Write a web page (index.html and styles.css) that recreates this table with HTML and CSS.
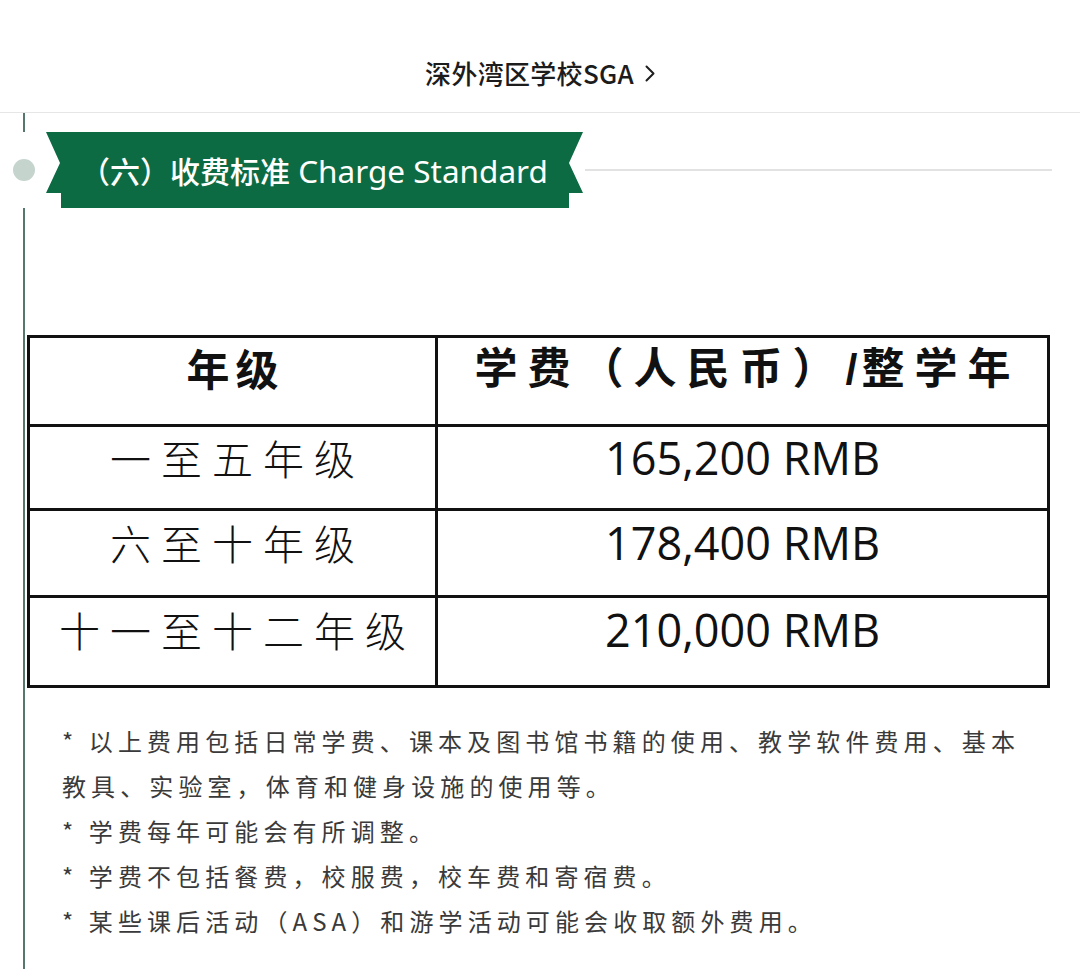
FILE: index.html
```html
<!DOCTYPE html>
<html lang="zh-CN">
<head>
<meta charset="utf-8">
<title>深外湾区学校SGA</title>
<link rel="stylesheet" href="styles.css">
</head>
<body>
<header class="topbar">
  <span class="topbar-title">深外湾区学校SGA</span>
  <svg class="topbar-chevron" width="10" height="17" viewBox="0 0 10 17" aria-hidden="true"><polyline points="1.5,1.5 8.5,8.5 1.5,15.5" fill="none" stroke="#1f1f1f" stroke-width="2" stroke-linecap="round" stroke-linejoin="round"/></svg>
</header>
<main class="article">
  <aside class="rail" aria-hidden="true">
    <span class="rail-line rail-line-short"></span>
    <span class="rail-node"><span class="rail-dot"></span></span>
    <span class="rail-line rail-line-long"></span>
  </aside>
  <section class="content">
    <div class="section-head">
      <div class="ribbon"><h2 class="ribbon-text"><span class="ribbon-cn">（六）收费标准</span> Charge Standard</h2></div>
      <span class="head-rule"></span>
    </div>
    <table class="fees">
      <tr class="row-head">
        <th class="grade grade-head">年级</th>
        <th class="fee fee-head">学费（人民币）<span class="slash">/</span>整学年</th>
      </tr>
      <tr class="row-1">
        <td class="grade">一至五年级</td>
        <td class="fee">165,200 RMB</td>
      </tr>
      <tr class="row-2">
        <td class="grade">六至十年级</td>
        <td class="fee">178,400 RMB</td>
      </tr>
      <tr class="row-3">
        <td class="grade">十一至十二年级</td>
        <td class="fee">210,000 RMB</td>
      </tr>
    </table>
    <div class="notes">
      <p>* 以上费用包括日常学费、课本及图书馆书籍的使用、教学软件费用、基本教具、实验室，体育和健身设施的使用等。</p>
      <p>* 学费每年可能会有所调整。</p>
      <p>* 学费不包括餐费，校服费，校车费和寄宿费。</p>
      <p>* 某些课后活动（ASA）和游学活动可能会收取额外费用。</p>
    </div>
  </section>
</main>
</body>
</html>
```
FILE: styles.css
```css
* { box-sizing: border-box; }

html, body {
  margin: 0;
  padding: 0;
  background: #ffffff;
}

body {
  min-height: 969px;
  display: flex;
  flex-direction: column;
  font-family: "Noto Sans", "Noto Sans CJK SC", sans-serif;
  color: #222;
}

/* ---------- top bar ---------- */
.topbar {
  height: 113px;
  border-bottom: 1px solid #e6e6e6;
  display: flex;
  justify-content: center;
  align-items: center;
  gap: 11px;
  padding-top: 34px;
}

.topbar-title {
  font-family: "Noto Sans CJK SC", sans-serif;
  font-size: 26px;
  font-weight: 500;
  letter-spacing: 0.3px;
  color: #1c1c1c;
  line-height: 36px;
}

.topbar-chevron {
  display: block;
  margin-top: 1px;
}

/* ---------- article ---------- */
.article {
  flex: 1;
  display: flex;
}

.rail {
  width: 27px;
  flex: none;
  display: flex;
  flex-direction: column;
}

.rail-line {
  display: block;
  width: 2px;
  margin-left: 23px;
  background: #56786c;
}

.rail-line-short { height: 19px; }
.rail-line-long { flex: 1; }

.rail-node {
  height: 76px;
  display: flex;
  align-items: center;
}

.rail-dot {
  display: block;
  flex: none;
  width: 22px;
  height: 22px;
  margin-left: 13px;
  border-radius: 50%;
  background: #c6d4ce;
}

.content {
  flex: 1;
  min-width: 0;
  display: flex;
  flex-direction: column;
}

/* ---------- section head ribbon ---------- */
.section-head {
  margin-top: 19px;
  height: 76px;
  display: flex;
  align-items: center;
}

.ribbon {
  margin-left: 19px;
  width: 537px;
  height: 76px;
  flex: none;
  background: #0c6b43;
  clip-path: polygon(0 0, 537px 0, 523px 31px, 537px 61px, 523px 61px, 523px 76px, 15px 76px, 15px 61px, 0 61px, 14px 31px);
  display: flex;
  align-items: center;
  padding-left: 34px;
}

.ribbon-text {
  margin: 0;
  font-family: "Noto Sans", "Noto Sans CJK SC", sans-serif;
  font-size: 31.5px;
  font-weight: 400;
  color: #ffffff;
  line-height: 40px;
  white-space: nowrap;
}

.ribbon-cn {
  font-family: "Noto Sans CJK SC", sans-serif;
  font-weight: 500;
  font-size: 30px;
}

.head-rule {
  margin-left: 2px;
  width: 467px;
  height: 2px;
  background: #e2e2e2;
}

/* ---------- fee table ---------- */
.fees {
  margin-top: 127px;
  width: 1023px;
  border-collapse: collapse;
  border: 3px solid #111;
  table-layout: fixed;
  color: #111;
}

.fees th,
.fees td {
  border: 3px solid #111;
  text-align: center;
  vertical-align: middle;
  padding: 0 0 20px 0;
  line-height: 1.2;
}

.row-head { height: 89px; }
.row-1 { height: 84px; }
.row-2 { height: 87px; }
.row-3 { height: 90px; }

.row-head th { padding-bottom: 26px; }
.row-3 td { padding-bottom: 24px; }

.grade {
  width: 408px;
  font-family: "Noto Sans CJK SC", sans-serif;
  font-size: 41px;
  font-weight: 300;
  letter-spacing: 10px;
  text-indent: 10px;
}

.grade-head {
  font-weight: 600;
  font-size: 43px;
  letter-spacing: 6px;
  text-indent: 6px;
}

.fee {
  font-family: "Open Sans", "Noto Sans", sans-serif;
  font-size: 45px;
  font-weight: 500;
}

.fee-head {
  font-family: "Noto Sans CJK SC", sans-serif;
  font-size: 43px;
  font-weight: 600;
  letter-spacing: 10px;
  text-indent: 10px;
}

.slash {
  font-family: "Liberation Sans", sans-serif;
  font-weight: 700;
  letter-spacing: 4px;
}

/* ---------- notes ---------- */
.notes {
  margin-top: 30px;
  padding-left: 35px;
  width: 1053px;
  padding-right: 46px;
  font-family: "Noto Sans CJK SC", sans-serif;
  font-size: 24px;
  letter-spacing: 5.1px;
  line-height: 45px;
  color: #3a3a3a;
}

.notes p {
  margin: 0;
}
```
